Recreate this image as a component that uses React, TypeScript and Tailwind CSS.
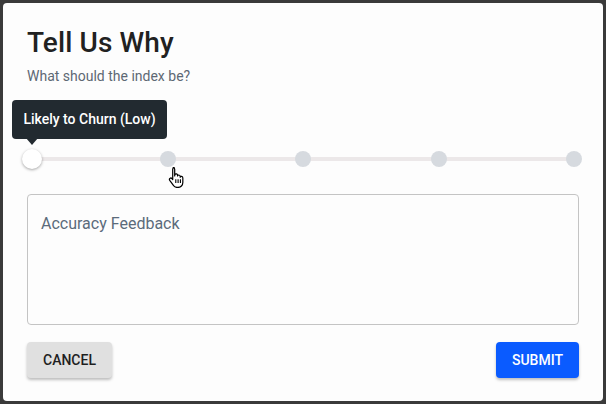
import React from "react";

function HandCursor() {
  return (
    <svg width="18" height="22" viewBox="0 0 16 20" className="absolute left-[165px] top-[163px]">
      <path
        d="M4.5 1.5c.8 0 1.4.6 1.4 1.4v6.2l.1-.9c.1-.7.7-1.2 1.4-1.1.7.1 1.2.7 1.1 1.4v.6c.1-.6.7-1 1.3-.9.7.1 1.1.7 1.1 1.3v.7c.2-.5.7-.8 1.3-.7.6.1 1.1.7 1.1 1.3v4.2c0 2.4-1.9 4.5-4.4 4.5H8.2c-1.3 0-2.5-.6-3.3-1.6L1.4 13c-.4-.6-.3-1.4.3-1.8.5-.4 1.3-.3 1.7.2l.7.9V2.9c0-.8.6-1.4 1.4-1.4z"
        fill="#fff"
        stroke="#000"
        strokeWidth="1.1"
        strokeLinejoin="round"
      />
      <path d="M6.9 12v3.5M9 12v3.5M11.1 12v3.5" stroke="#000" strokeWidth="1" />
    </svg>
  );
}

export default function App() {
  const dots = [25, 50, 75, 100];
  return (
    <div
      className="w-[606px] h-[404px] bg-[#3a3a3a] p-[3px] overflow-hidden"
      style={{ fontFamily: "Roboto, 'Liberation Sans', sans-serif" }}
    >
      <div className="relative w-full h-full bg-[#fdfdfd] rounded-[4px] px-[24px] pt-[24px] flex flex-col">
        <h1 className="text-[28px] leading-[32px] font-medium text-[#212121] tracking-[0.1px]">Tell Us Why</h1>
        <p className="mt-[9px] text-[14px] leading-[16px] text-[#5d6874]">What should the index be?</p>

        <div className="relative mt-[65px] mx-[5px] h-[20px]">
          <div className="absolute left-0 right-0 top-[8px] h-[4px] bg-[#ece8e9] rounded-full" />
          {dots.map((p) => (
            <div
              key={p}
              className="absolute top-[2px] w-[16px] h-[16px] -ml-[8px] rounded-full bg-[#d6dadf]"
              style={{ left: `${p}%` }}
            />
          ))}
          <div className="absolute left-[-10px] top-0 w-[20px] h-[20px] rounded-full bg-white shadow-[0_1px_3px_rgba(0,0,0,0.35)]" />
          <div className="absolute left-[-20px] top-[-49px] h-[39px] w-[155px] rounded-[4px] bg-[#222a30] flex items-center justify-center">
            <span className="text-white text-[14px] font-medium">Likely to Churn (Low)</span>
            <div className="absolute left-[14px] bottom-[-6px] w-0 h-0 border-l-[6px] border-r-[6px] border-t-[7px] border-l-transparent border-r-transparent border-t-[#222a30]" />
          </div>
        </div>

        <div className="mt-[25px] h-[131px] border border-[#c4c4c4] rounded-[4px] px-[13px] pt-[17px]">
          <span className="text-[16px] leading-[20px] text-[#5b6b7b]">Accuracy Feedback</span>
        </div>

        <div className="mt-[17px] flex justify-between">
          <button className="h-[36px] px-[16px] rounded-[4px] bg-[#e0e0e0] text-[#1f1f1f] text-[14px] font-medium shadow-[0_2px_3px_rgba(0,0,0,0.25)]">
            CANCEL
          </button>
          <button className="h-[36px] px-[16px] rounded-[4px] bg-[#0a5bff] text-white text-[14px] font-medium shadow-[0_2px_3px_rgba(0,0,0,0.25)]">
            SUBMIT
          </button>
        </div>
        <HandCursor />
      </div>
    </div>
  );
}
